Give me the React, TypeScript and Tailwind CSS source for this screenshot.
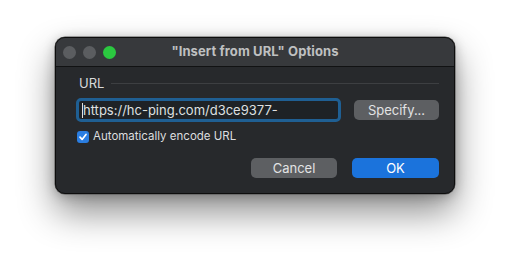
import React from "react";

export default function App() {
  return (
    <div className="w-[510px] h-[267px] bg-white overflow-hidden" style={{ fontFamily: "Inter, 'Liberation Sans', sans-serif" }}>
      <div className="ml-[55px] mt-[37px] w-[400px] h-[157px] rounded-[10px] bg-[#27292c] border border-[#0d0d0d] shadow-[0_0_0_0.5px_#555,0_18px_36px_rgba(0,0,0,0.45),0_2px_12px_rgba(0,0,0,0.25)] overflow-hidden flex flex-col">
        <div className="h-[29px] bg-[#37393c] border-b border-[#111213] relative flex items-center justify-center shrink-0">
          <div className="absolute left-[7px] top-[8px] flex gap-[7px]">
            <div className="w-[13px] h-[13px] rounded-full bg-[#5b5d60]" />
            <div className="w-[13px] h-[13px] rounded-full bg-[#5b5d60]" />
            <div className="w-[13px] h-[13px] rounded-full bg-[#2bc840]" />
          </div>
          <div className="text-[13px] font-bold text-[#bfc0c1] tracking-[0.1px]">"Insert from URL" Options</div>
        </div>
        <div className="flex flex-col pl-[23px] pr-[15px]">
          <div className="flex items-center gap-[7px] h-[18px] mt-[7px]">
            <span className="text-[13px] text-[#d9dadb] leading-none">URL</span>
            <div className="flex-1 h-px bg-[#3d3f42]" />
          </div>
          <div className="flex items-center mt-[6px]">
            <div className="w-[265px] h-[24px] rounded-[5px] border-[3px] border-[#1f5f93] bg-[#1e2226] flex items-center -ml-[3px]">
              <div className="w-px h-[15px] bg-[#e0e0e0] ml-[3px]" />
              <span className="text-[13px] text-[#dfe0e1] leading-none">https://hc-ping.com/d3ce9377-</span>
            </div>
            <button className="ml-[13px] w-[85px] h-[20px] rounded-[5px] bg-[#5d5f62] text-[13px] text-[#e2e3e4] leading-none flex items-center justify-center">Specify...</button>
          </div>
          <div className="flex items-center gap-[4px] mt-[9px] -ml-[2px] h-[12px]">
            <div className="w-[12px] h-[12px] rounded-[3px] bg-[#2a7de1] flex items-center justify-center">
              <svg width="10" height="10" viewBox="0 0 10 10"><path d="M2 5.2 L4.1 7.4 L8 2.4" stroke="white" strokeWidth="1.7" fill="none" strokeLinecap="round" strokeLinejoin="round" /></svg>
            </div>
            <span className="text-[11.5px] text-[#dcdddf] leading-none">Automatically encode URL</span>
          </div>
          <div className="flex justify-end gap-[15px] mt-[15px]">
            <button className="w-[86px] h-[20px] rounded-[5px] bg-[#5d5f62] text-[13px] text-[#e2e3e4] leading-none flex items-center justify-center">Cancel</button>
            <button className="w-[87px] h-[20px] rounded-[5px] bg-[#1b73dc] text-[13px] text-white leading-none flex items-center justify-center">OK</button>
          </div>
        </div>
      </div>
    </div>
  );
}
